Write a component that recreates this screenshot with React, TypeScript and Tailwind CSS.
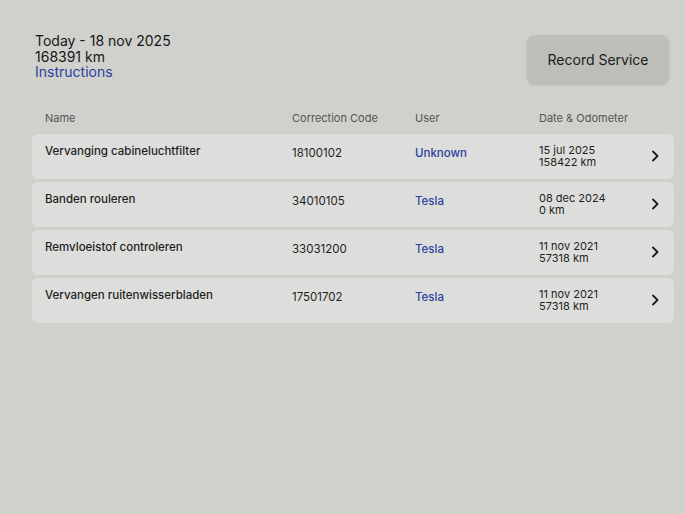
import React from 'react';

interface ServiceRecord {
    name: string;
    code: string;
    user: string;
    date: string;
    odometer: string;
}

const records: ServiceRecord[] = [
    { name: 'Vervanging cabineluchtfilter', code: '18100102', user: 'Unknown', date: '15 jul 2025', odometer: '158422 km' },
    { name: 'Banden rouleren', code: '34010105', user: 'Tesla', date: '08 dec 2024', odometer: '0 km' },
    { name: 'Remvloeistof controleren', code: '33031200', user: 'Tesla', date: '11 nov 2021', odometer: '57318 km' },
    { name: 'Vervangen ruitenwisserbladen', code: '17501702', user: 'Tesla', date: '11 nov 2021', odometer: '57318 km' },
];

const Chevron: React.FC = () => (
    <svg width="10" height="12" viewBox="0 0 10 12" fill="none" className="text-[#1c1c1c]">
        <path d="M3 1.5 L7.5 6 L3 10.5" stroke="currentColor" strokeWidth="1.8" strokeLinecap="round" strokeLinejoin="round" />
    </svg>
);

const Row: React.FC<{ record: ServiceRecord }> = ({ record }) => (
    <div className="flex items-center h-[45px] rounded-md bg-[#dddedb] pl-[13px] pr-[14px] text-[11.5px] text-[#1e1e1e]">
        <div className="w-[247px] font-medium -mt-[8px]">{record.name}</div>
        <div className="w-[123px] -mt-[4px]">{record.code}</div>
        <div className="w-[124px] font-medium text-[#2a3f9c] -mt-[4px]">{record.user}</div>
        <div className="flex-1 leading-[12.5px] text-[11px]">
            <div>{record.date}</div>
            <div>{record.odometer}</div>
        </div>
        <Chevron />
    </div>
);

export default function App() {
    return (
        <div className="w-[685px] h-[514px] bg-[#d0d1cd] overflow-hidden" style={{ fontFamily: 'Inter, "Noto Sans", sans-serif' }}>
            <div className="flex justify-between pl-[35px] pr-[16px] pt-[33px]">
                <div className="text-[14px] leading-[15.5px] text-[#161616]">
                    <div>Today - 18 nov 2025</div>
                    <div>168391 km</div>
                    <div className="text-[#2a409e]">Instructions</div>
                </div>
                <button className="w-[142px] h-[49px] mt-[2px] rounded-lg bg-[#bdbeb7] text-[14px] text-[#1c1c1c] shadow-sm">
                    Record Service
                </button>
            </div>

            <div className="mx-[32px] mt-[26px] w-[642px]">
                <div className="flex px-[13px] pb-[7px] text-[11px] text-[#555650]">
                    <div className="w-[247px]">Name</div>
                    <div className="w-[123px]">Correction Code</div>
                    <div className="w-[124px]">User</div>
                    <div className="flex-1">Date &amp; Odometer</div>
                </div>
                <div className="flex flex-col gap-[3px]">
                    {records.map((r, i) => (
                        <Row key={i} record={r} />
                    ))}
                </div>
            </div>
        </div>
    );
}
